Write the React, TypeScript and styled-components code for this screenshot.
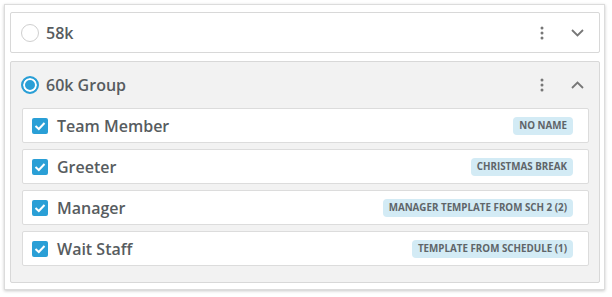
import React from "react"
import styled, { createGlobalStyle } from "styled-components"

const GlobalStyle = createGlobalStyle`
  body {
    margin: 0;
    background: #ffffff;
    font-family: "Open Sans", "Liberation Sans", sans-serif;
  }
`

const Page = styled.div`
  padding: 4px 7px 8px 4px;
`

const Card = styled.div`
  background: #ffffff;
  border: 1px solid #dcdcdc;
  box-shadow: 0 1px 3px rgba(0, 0, 0, 0.22);
  padding: 7px 4px 6px 5px;
  display: flex;
  flex-direction: column;
  gap: 8px;
`

const Group = styled.div<{ $open?: boolean }>`
  border: 1px solid #d8d8d8;
  border-radius: 2px;
  background: ${(p) => (p.$open ? "#f2f2f2" : "#ffffff")};
`

const GroupHeader = styled.div<{ $open?: boolean }>`
  display: flex;
  align-items: center;
  height: ${(p) => (p.$open ? 46 : 39)}px;
  padding: 0 14px 0 10px;
`

const Radio = styled.span<{ $checked?: boolean }>`
  box-sizing: border-box;
  width: 18px;
  height: 18px;
  border-radius: 50%;
  flex: none;
  border: ${(p) => (p.$checked ? "2px solid #2a9fd6" : "1px solid #cfcfcf")};
  background: ${(p) => (p.$checked ? "#2a9fd6" : "#ffffff")};
  box-shadow: ${(p) => (p.$checked ? "inset 0 0 0 2px #ffffff" : "none")};
`

const GroupTitle = styled.span`
  margin-left: 7px;
  font-size: 16px;
  font-weight: 600;
  color: #575c60;
  flex: 1;
`

const IconButton = styled.span`
  display: inline-flex;
  align-items: center;
  justify-content: center;
  width: 16px;
  height: 20px;
  color: #666;
`

const Icons = styled.div`
  display: flex;
  align-items: center;
  gap: 19px;
`

const RoleList = styled.div`
  display: flex;
  flex-direction: column;
  gap: 6px;
  padding: 0 10px 16px 11px;
`

const RoleRow = styled.div`
  display: flex;
  align-items: center;
  height: 33px;
  background: #ffffff;
  border: 1px solid #dcdcdc;
  border-radius: 2px;
  padding: 0 15px 0 9px;
`

const Checkbox = styled.span`
  width: 16px;
  height: 16px;
  flex: none;
  border-radius: 2px;
  background: #2a9fd6;
  display: inline-flex;
  align-items: center;
  justify-content: center;
`

const RoleName = styled.span`
  margin-left: 9px;
  font-size: 16px;
  font-weight: 600;
  color: #575c60;
  flex: 1;
`

const Tag = styled.span`
  height: 18px;
  line-height: 18px;
  padding: 0 6px;
  border-radius: 4px;
  background: #d3ebf5;
  color: #5f6569;
  font-size: 9.8px;
  font-weight: 700;
  text-transform: uppercase;
`

const Dots = () => (
  <svg width="4" height="14" viewBox="0 0 4 14">
    <circle cx="2" cy="2" r="1.5" fill="#777" />
    <circle cx="2" cy="7" r="1.5" fill="#777" />
    <circle cx="2" cy="12" r="1.5" fill="#777" />
  </svg>
)

const Chevron = ({ up }: { up?: boolean }) => (
  <svg width="13" height="8" viewBox="0 0 13 8">
    <path
      d={up ? "M1 7 L6.5 1.5 L12 7" : "M1 1 L6.5 6.5 L12 1"}
      fill="none"
      stroke="#777"
      strokeWidth="1.8"
    />
  </svg>
)

const Check = () => (
  <svg width="12" height="10" viewBox="0 0 12 10">
    <path d="M1.5 5 L4.8 8 L10.5 2" fill="none" stroke="#fff" strokeWidth="2" />
  </svg>
)

const roles = [
  { name: "Team Member", tag: "No Name" },
  { name: "Greeter", tag: "Christmas Break" },
  { name: "Manager", tag: "Manager Template from SCH 2 (2)" },
  { name: "Wait Staff", tag: "Template from Schedule (1)" },
]

export default function App() {
  return (
    <Page>
      <GlobalStyle />
      <Card>
        <Group>
          <GroupHeader>
            <Radio />
            <GroupTitle>58k</GroupTitle>
            <Icons>
              <IconButton>
                <Dots />
              </IconButton>
              <IconButton>
                <Chevron />
              </IconButton>
            </Icons>
          </GroupHeader>
        </Group>
        <Group $open>
          <GroupHeader $open>
            <Radio $checked />
            <GroupTitle>60k Group</GroupTitle>
            <Icons>
              <IconButton>
                <Dots />
              </IconButton>
              <IconButton>
                <Chevron up />
              </IconButton>
            </Icons>
          </GroupHeader>
          <RoleList>
            {roles.map((r) => (
              <RoleRow key={r.name}>
                <Checkbox>
                  <Check />
                </Checkbox>
                <RoleName>{r.name}</RoleName>
                <Tag>{r.tag}</Tag>
              </RoleRow>
            ))}
          </RoleList>
        </Group>
      </Card>
    </Page>
  )
}
